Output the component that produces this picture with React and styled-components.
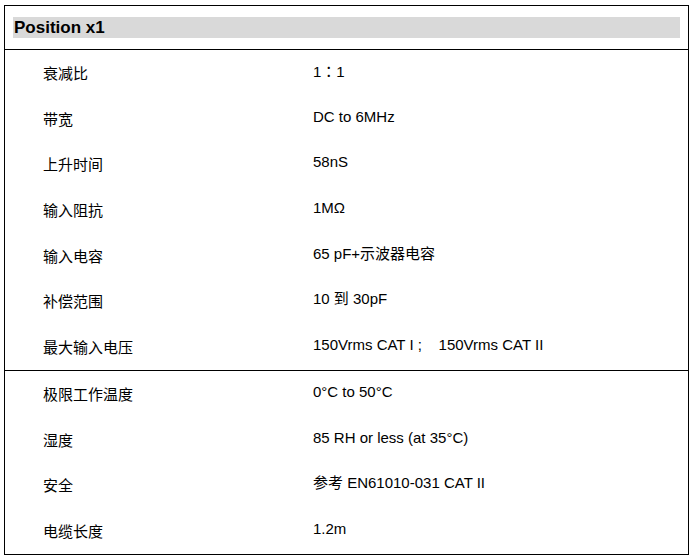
import styled, { createGlobalStyle } from "styled-components";

const GlobalStyle = createGlobalStyle`
  body {
    margin: 0;
    background: #fff;
    font-family: "Liberation Sans", Arial, "Noto Sans CJK SC", sans-serif;
    color: #000;
  }
`;

const Sheet = styled.div`
  margin: 5px 0 0 4px;
  width: 683px;
  border: 1px solid #000;
`;

const Header = styled.div`
  padding: 11px 8px;
  border-bottom: 1px solid #000;
`;

const HeaderBar = styled.div`
  background: #d9d9d9;
  height: 21px;
  line-height: 21px;
  padding-left: 1px;
  font-size: 17px;
  font-weight: 700;
`;

const Section = styled.div`
  border-top: ${(p) => (p.$divided ? "1px solid #000" : "none")};
`;

const Row = styled.div`
  display: grid;
  grid-template-columns: 308px 1fr;
  height: 45.7px;
  align-items: start;
  font-size: 15px;
  line-height: 20px;
`;

const Label = styled.span`
  padding-left: 38px;
  padding-top: 14px;
`;

const Value = styled.span`
  padding-top: 11px;
  white-space: pre;
`;

// full-width colon, centred in its cell as in the Japanese CJK face
const WideColon = styled.span`
  font-family: "Noto Sans CJK JP", sans-serif;
`;

const general = [
  ["衰减比", <>1<WideColon>：</WideColon>1</>],
  ["带宽", "DC to 6MHz"],
  ["上升时间", "58nS"],
  ["输入阻抗", "1MΩ"],
  ["输入电容", "65 pF+示波器电容"],
  ["补偿范围", "10 到 30pF"],
  ["最大输入电压", "150Vrms CAT I ;    150Vrms CAT II"],
];

const environment = [
  ["极限工作温度", "0°C to 50°C"],
  ["湿度", "85 RH or less (at 35°C)"],
  ["安全", "参考 EN61010-031 CAT II"],
  ["电缆长度", "1.2m"],
];

function SpecRows({ rows }) {
  return rows.map(([label, value]) => (
    <Row key={label}>
      <Label>{label}</Label>
      <Value>{value}</Value>
    </Row>
  ));
}

export default function App() {
  return (
    <>
      <GlobalStyle />
      <Sheet>
        <Header>
          <HeaderBar>Position x1</HeaderBar>
        </Header>
        <Section>
          <SpecRows rows={general} />
        </Section>
        <Section $divided>
          <SpecRows rows={environment} />
        </Section>
      </Sheet>
    </>
  );
}
